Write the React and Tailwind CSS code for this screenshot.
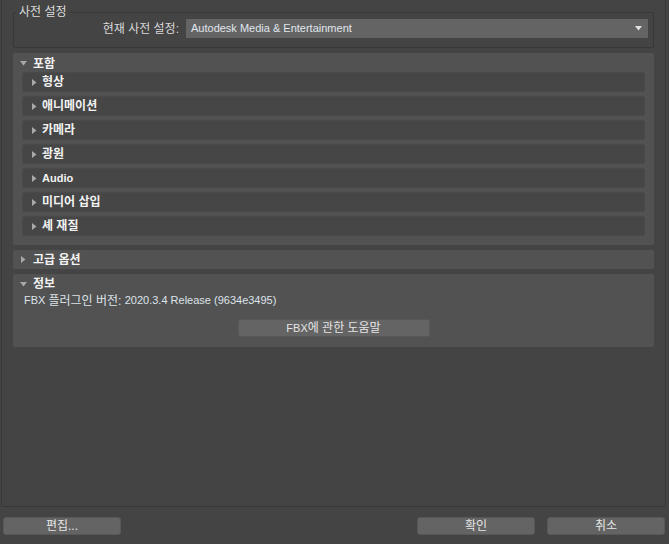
import React from "react";

const font = {
  fontFamily: '"Liberation Sans", "Noto Sans CJK KR", sans-serif',
};

// 라틴 문자는 원본보다 넓게 나와서 11px로 줄임
const L = ({ children }) => <span className="text-[11px]">{children}</span>;

const Tri = ({ open }) =>
  open ? (
    <svg width="7" height="5" viewBox="0 0 7 5" className="shrink-0">
      <path d="M0 0 L7 0 L3.5 4.5 Z" fill="#a8a8a8" />
    </svg>
  ) : (
    <svg width="5" height="7" viewBox="0 0 5 7" className="shrink-0">
      <path d="M0 0 L4.5 3.5 L0 7 Z" fill="#a8a8a8" />
    </svg>
  );

const SubRollout = ({ label }) => (
  <div className="h-[18px] flex items-center bg-[#464646] rounded-[2px] shadow-[0_0_0_1px_#4a4a4a]">
    <div className="w-[19px] flex justify-center pl-[3px]">
      <Tri />
    </div>
    <span className="text-[12px] font-bold text-[#f2f2f2] leading-none">
      {label}
    </span>
  </div>
);

const Btn = ({ children, className }) => (
  <button
    className={
      "h-[18px] bg-[#646464] rounded-[3px] border border-[#585858] text-[12px] text-[#e4e4e4] leading-none flex items-center justify-center " +
      className
    }
  >
    {children}
  </button>
);

const subItems = ["형상", "애니메이션", "카메라", "광원", <L key="a">Audio</L>, "미디어 삽입", "셰 재질"];

export default function App() {
  return (
    <div
      className="w-[669px] h-[544px] bg-[#444444] overflow-hidden text-[#dcdcdc]"
      style={font}
    >
      {/* 스크롤 영역 */}
      <div className="ml-[1px] w-[665px] h-[507px] border-l border-r border-b border-[#383838] px-[11px] pt-[12px]">
        {/* 사전 설정 */}
        <div className="relative h-[36px] border border-[#383838] rounded-[2px] flex items-start pt-[6px] pr-[5px]">
          <span className="absolute -top-[9px] left-[2px] px-[3px] bg-[#444444] text-[12px] text-[#dcdcdc] leading-[16px]">
            사전 설정
          </span>
          <div className="w-[172px] h-[19px] flex items-center justify-end pr-[7px] text-[12px] text-[#d8d8d8]">
            현재 사전 설정:
          </div>
          <div className="flex-1 h-[19px] bg-[#646464] flex items-center justify-between pl-[5px] pr-[6px] text-[11px] text-[#e0e6ec]">
            <span>Autodesk Media &amp; Entertainment</span>
            <svg width="7" height="5" viewBox="0 0 7 5">
              <path d="M0 0 L7 0 L3.5 4.5 Z" fill="#e0e0e0" />
            </svg>
          </div>
        </div>

        {/* 포함 */}
        <div className="mt-[5px] bg-[#525252] rounded-[2px] px-[10px] pb-[10px]">
          <div className="h-[20px] flex items-center -ml-[3px] pt-[1px]">
            <div className="w-[13px] flex justify-start">
              <Tri open />
            </div>
            <span className="text-[12px] font-bold text-[#f2f2f2] leading-none">포함</span>
          </div>
          <div className="flex flex-col gap-[6px]">
            {subItems.map((s, i) => (
              <SubRollout key={i} label={s} />
            ))}
          </div>
        </div>

        {/* 고급 옵션 */}
        <div className="mt-[5px] h-[19px] bg-[#525252] rounded-[2px] flex items-center pl-[8px]">
          <div className="w-[12px] flex">
            <Tri />
          </div>
          <span className="text-[12px] font-bold text-[#f2f2f2] leading-none">고급 옵션</span>
        </div>

        {/* 정보 */}
        <div className="mt-[5px] h-[73px] bg-[#525252] rounded-[2px] flex flex-col">
          <div className="h-[18px] flex items-center pl-[7px] pt-[2px]">
            <div className="w-[13px] flex">
              <Tri open />
            </div>
            <span className="text-[12px] font-bold text-[#f2f2f2] leading-none">정보</span>
          </div>
          <div className="h-[17px] flex items-center pl-[11px] text-[12px] text-[#dde3ea] leading-none whitespace-pre">
            <L>FBX </L>플러그인 버전: <L>2020.3.4 Release (9634e3495)</L>
          </div>
          <div className="flex justify-center mt-[10px]">
            <Btn className="w-[192px]">
              <L>FBX</L>에 관한 도움말
            </Btn>
          </div>
        </div>
      </div>

      {/* 하단 버튼 */}
      <div className="flex items-center mt-[10px] pl-[3px] pr-[4px]">
        <Btn className="w-[118px]">편집...</Btn>
        <div className="flex-1" />
        <Btn className="w-[118px]">확인</Btn>
        <Btn className="w-[118px] ml-[12px]">취소</Btn>
      </div>
    </div>
  );
}
